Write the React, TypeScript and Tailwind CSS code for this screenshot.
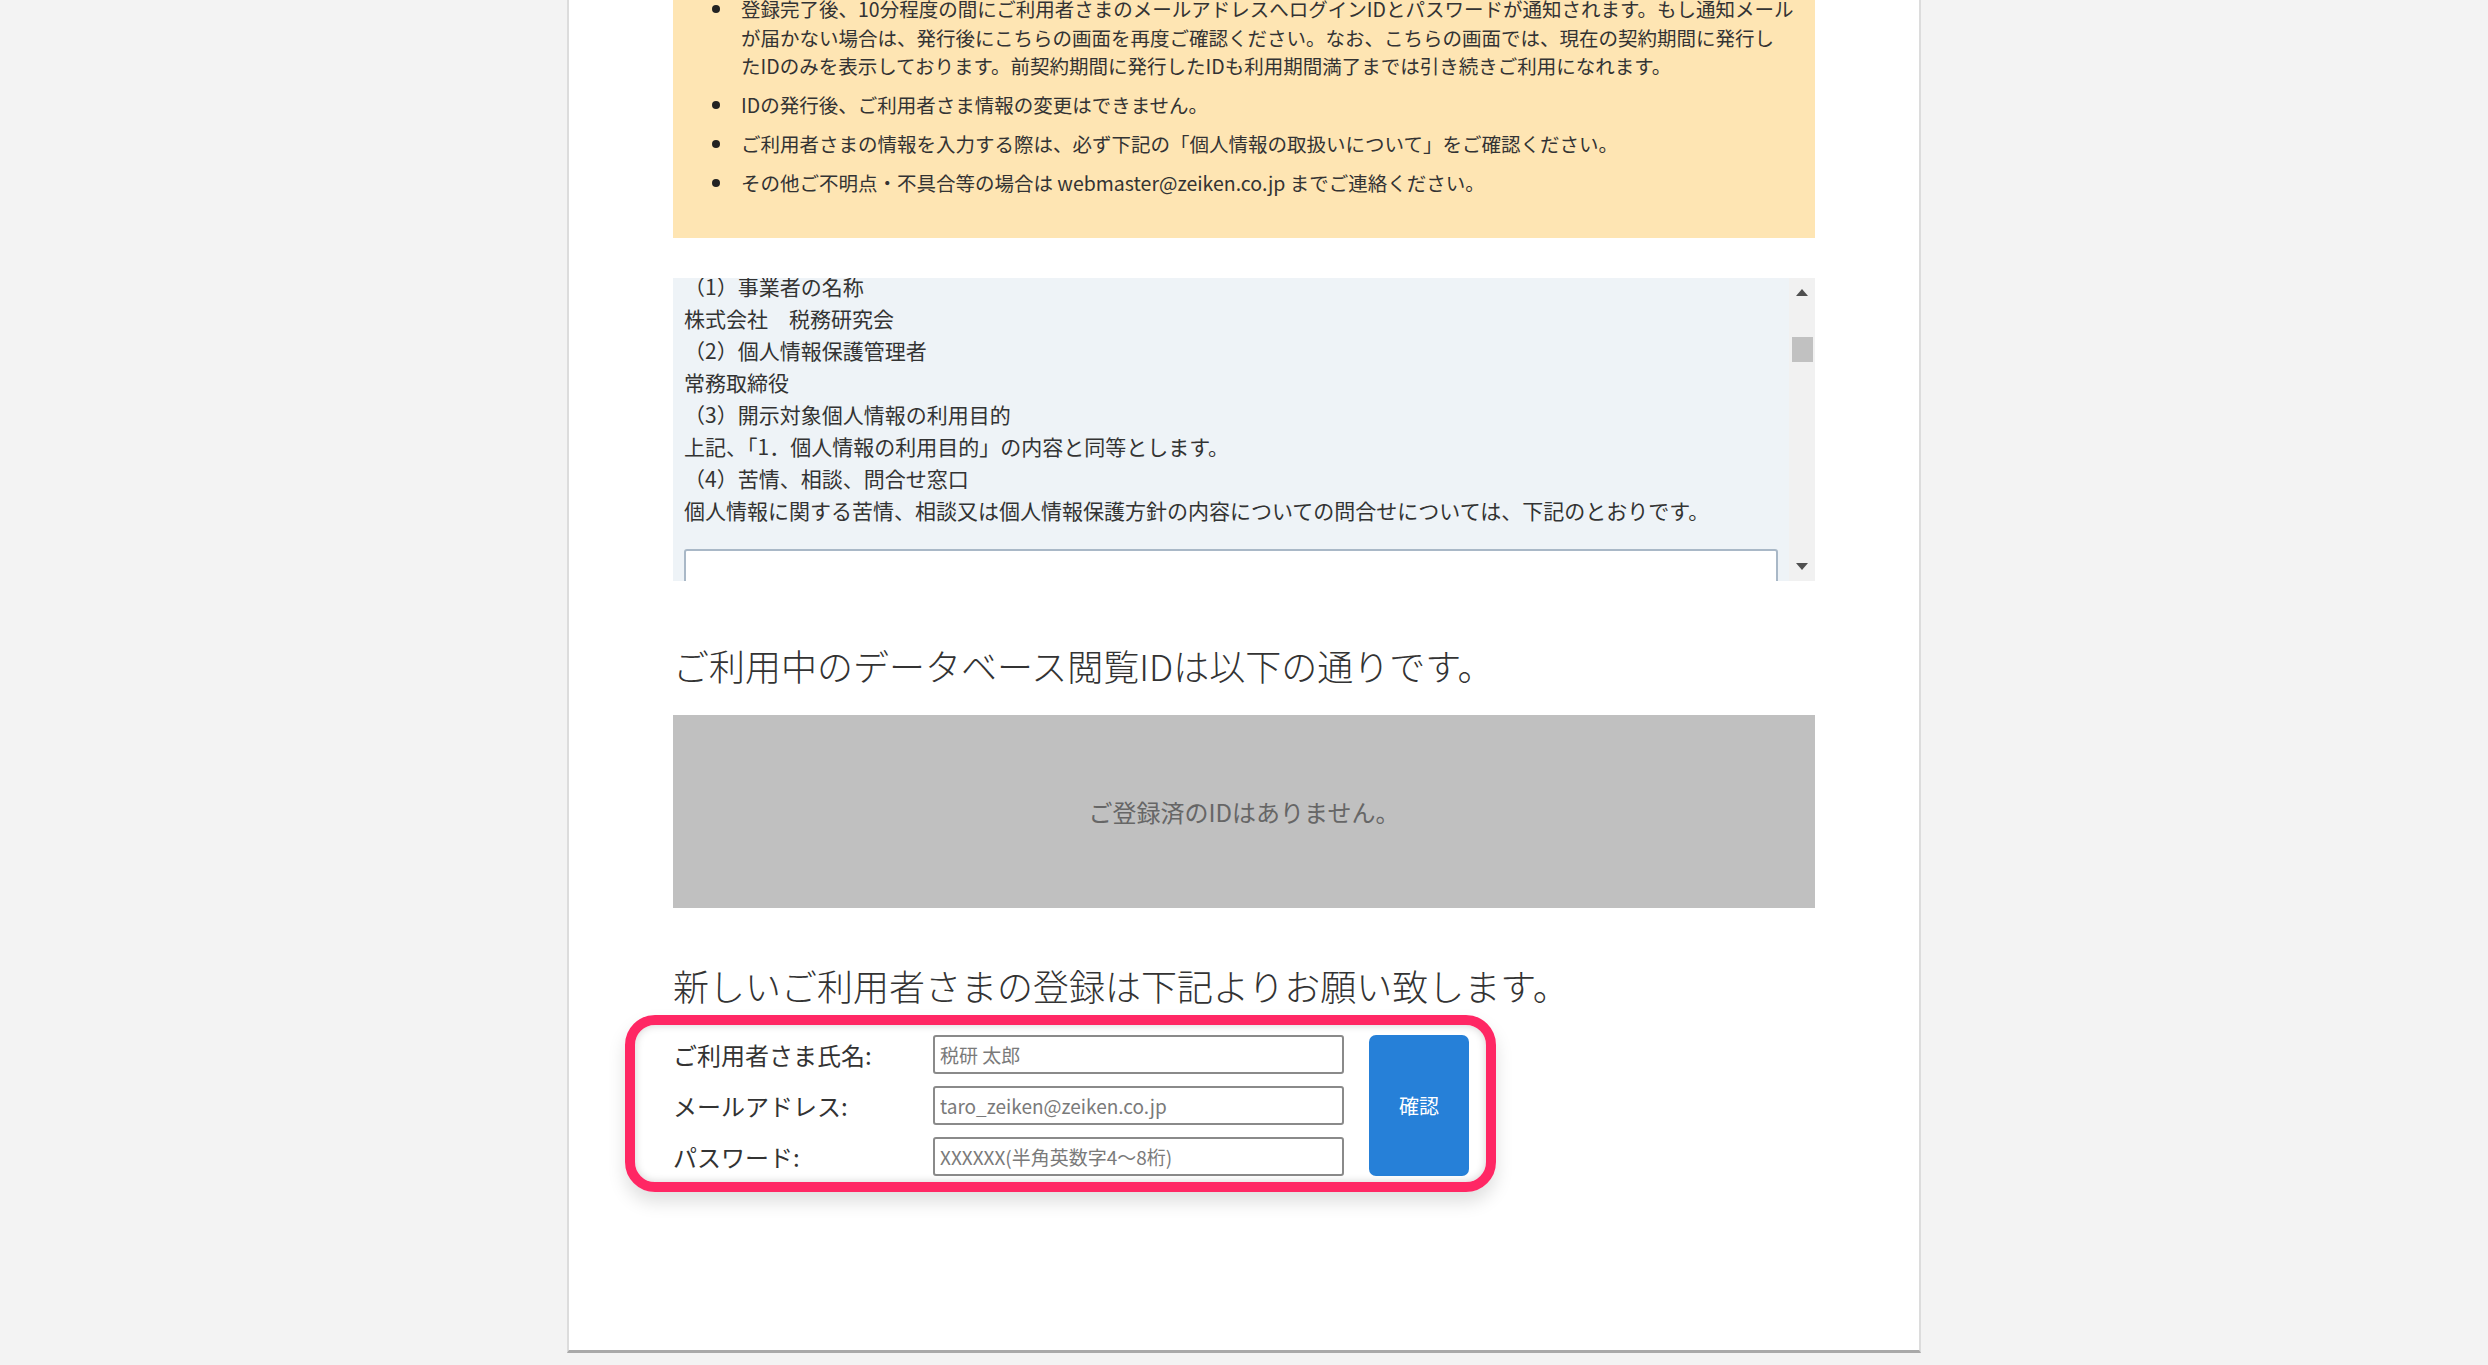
import React from "react";

const notices = [
  [
    "登録完了後、10分程度の間にご利用者さまのメールアドレスへログインIDとパスワードが通知されます。もし通知メール",
    "が届かない場合は、発行後にこちらの画面を再度ご確認ください。なお、こちらの画面では、現在の契約期間に発行し",
    "たIDのみを表示しております。前契約期間に発行したIDも利用期間満了までは引き続きご利用になれます。",
  ],
  ["IDの発行後、ご利用者さま情報の変更はできません。"],
  ["ご利用者さまの情報を入力する際は、必ず下記の「個人情報の取扱いについて」をご確認ください。"],
  ["その他ご不明点・不具合等の場合は webmaster@zeiken.co.jp までご連絡ください。"],
];

const policyLines = [
  "（1）事業者の名称",
  "株式会社　税務研究会",
  "（2）個人情報保護管理者",
  "常務取締役",
  "（3）開示対象個人情報の利用目的",
  "上記、「1．個人情報の利用目的」の内容と同等とします。",
  "（4）苦情、相談、問合せ窓口",
  "個人情報に関する苦情、相談又は個人情報保護方針の内容についての問合せについては、下記のとおりです。",
];

const fields = [
  { label: "ご利用者さま氏名:", placeholder: "税研 太郎", type: "text" },
  { label: "メールアドレス:", placeholder: "taro_zeiken@zeiken.co.jp", type: "email" },
  { label: "パスワード:", placeholder: "XXXXXX(半角英数字4～8桁)", type: "password" },
];

const Notice = () => (
  <div className="-mt-[30px] bg-[#fee5b3] pt-[25px] pb-[40px] text-[19.5px] leading-[28.6px] text-[#333]">
    <ul className="flex flex-col gap-[10.5px]">
      {notices.map((lines, i) => (
        <li key={i} className="flex">
          <span className="w-[68px] shrink-0 pl-[39px] pt-[10px]">
            <span className="block w-[8px] h-[8px] rounded-full bg-[#222]" />
          </span>
          <p className="whitespace-nowrap">
            {lines.map((line, j) => (
              <React.Fragment key={j}>
                {line}
                {j < lines.length - 1 && <br />}
              </React.Fragment>
            ))}
          </p>
        </li>
      ))}
    </ul>
  </div>
);

const PolicyBox = () => (
  <div className="mt-[40px] h-[303px] flex bg-[#eef3f7] overflow-hidden">
    <div className="flex-1 overflow-hidden pl-[11px] pr-[11px]">
      <div className="-mt-[8px] text-[21px] leading-[32px] text-[#333]">
        {policyLines.map((line, i) => (
          <p key={i} className="whitespace-nowrap">
            {line}
          </p>
        ))}
      </div>
      <div className="mt-[23px] h-[60px] bg-white border-2 border-[#a9b8c7] rounded-[3px]" />
    </div>
    {/* scrollbar */}
    <div className="w-[26px] shrink-0 bg-[#f1f1f1] flex flex-col items-center">
      <svg width="12" height="8" viewBox="0 0 12 8" className="mt-[10px]">
        <path d="M0 8 L6 1 L12 8 Z" fill="#505050" />
      </svg>
      <div className="mt-[41px] w-[21px] h-[25px] bg-[#c1c1c1]" />
      <div className="flex-1" />
      <svg width="12" height="8" viewBox="0 0 12 8" className="mb-[10px]">
        <path d="M0 0 L12 0 L6 7 Z" fill="#505050" />
      </svg>
    </div>
  </div>
);

const RegisterForm = () => (
  <div className="relative mt-[25px] flex items-stretch self-start">
    <div className="flex flex-col gap-[12px]">
      {fields.map((f) => (
        <label key={f.label} className="flex items-center">
          <span className="w-[260px] text-[24px] text-[#333]">{f.label}</span>
          <input
            type={f.type === "password" ? "text" : f.type}
            placeholder={f.placeholder}
            className="w-[411px] h-[39px] px-[5px] border-2 border-[#8a8a8a] rounded-[3px] bg-white text-[19px] text-[#333] placeholder:text-[#7a7a7a] outline-none"
          />
        </label>
      ))}
    </div>
    <button
      type="button"
      className="ml-[25px] w-[100px] rounded-[7px] bg-[#2680d8] text-white text-[20px]"
    >
      確認
    </button>
    {/* highlight frame */}
    <div className="pointer-events-none absolute -left-[48px] -right-[27px] -top-[20px] -bottom-[16px] rounded-[30px] border-[10px] border-[#ff2764] shadow-[0_10px_18px_rgba(0,0,0,0.13),inset_0_0_9px_rgba(0,0,0,0.18)]" />
  </div>
);

export default function App() {
  return (
    <div
      className="h-[1365px] overflow-hidden bg-[#f3f3f3]"
      style={{ fontFamily: '"Noto Sans CJK JP", "Noto Sans", sans-serif' }}
    >
      <div className="mx-auto w-[1354px] h-[1353px] flex flex-col bg-white border-x-2 border-x-[#dcdcdc] border-b-[3px] border-b-[#a9a9a9] px-[104px]">
        <Notice />
        <PolicyBox />

        <h2 className="mt-[60px] text-[36px] leading-[49px] font-light text-[#333]">
          ご利用中のデータベース閲覧IDは以下の通りです。
        </h2>
        <div className="mt-[25px] h-[193px] flex items-center justify-center bg-[#c0c0c0] text-[24px] text-[#666]">
          ご登録済のIDはありません。
        </div>

        <h2 className="mt-[53px] text-[36px] leading-[49px] font-light text-[#333]">
          新しいご利用者さまの登録は下記よりお願い致します。
        </h2>
        <RegisterForm />
      </div>
    </div>
  );
}
